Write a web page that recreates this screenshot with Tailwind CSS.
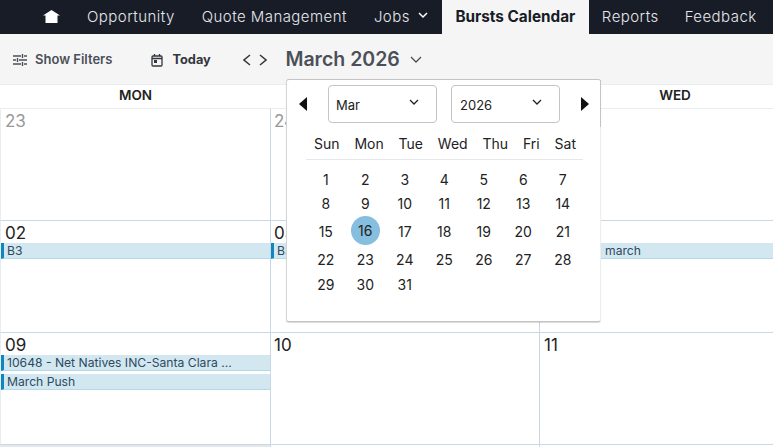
<!DOCTYPE html>
<html lang="en">
  <head>
    <meta charset="UTF-8" />
    <title>Bursts Calendar</title>
    <script src="https://cdn.jsdelivr.net/npm/@tailwindcss/browser@4"></script>
  </head>
  <body class="font-[Inter,sans-serif] bg-white overflow-hidden">
    <div class="relative w-[773px] h-[447px] overflow-hidden">
      <nav class="flex items-center h-[34px] bg-[#181c27] text-[#e5e7eb] text-[15px] tracking-[0.45px] font-light">
        <svg class="ml-[43px] mb-[1px] w-[17px] h-[15px]" viewBox="0 0 17 15" fill="#fff"><path d="M8.5 1 L17 6.5 H14.5 V14 H2.5 V6.5 H0 Z" /></svg>
        <span class="ml-[27px]">Opportunity</span>
        <span class="ml-[27px]">Quote Management</span>
        <span class="ml-[27px]">Jobs</span>
        <svg class="ml-[8px] mb-[4px] w-[10px] h-[7px]" viewBox="0 0 10 7" fill="none" stroke="#fff" stroke-width="1.5"><path d="M1 1l4 4 4-4" /></svg>
        <span class="ml-[14px] flex items-center justify-center h-full w-[147px] bg-[#f5f5f5] text-[#181c27] font-bold tracking-normal text-[15.3px]">Bursts Calendar</span>
        <span class="ml-[13px]">Reports</span>
        <span class="ml-[26px]">Feedback</span>
      </nav>

      <div class="flex items-center h-[50px] pt-[2px] bg-[#f5f5f5] text-[#4b5058]">
        <svg class="ml-[13px] w-[14px] h-[12px]" viewBox="0 0 14 12" fill="none" stroke="#4b5058" stroke-width="1.4"><path d="M0 2h8M11 2h3M9.5 0v4M0 6h3M6 6h8M4.5 4v4M0 10h8M11 10h3M9.5 8v4" /></svg>
        <span class="ml-[8px] text-[13px] font-semibold">Show Filters</span>
        <svg class="ml-[39px] w-[12px] h-[13px]" viewBox="0 0 12 13" fill="none" stroke="#33373d" stroke-width="1.3"><rect x="1" y="2" width="10" height="10" rx="1" /><path d="M1 4.5h10M3.5 0v2M8.5 0v2" /><rect x="3" y="6" width="3" height="3" fill="#33373d" stroke="none" /></svg>
        <span class="ml-[9px] w-[38px] text-[12.8px] font-bold text-[#33373d]">Today</span>
        <svg class="ml-[33px] w-[8px] h-[12px]" viewBox="0 0 8 12" fill="none" stroke="#33373d" stroke-width="1.5"><path d="M7 1L1 6l6 5" /></svg>
        <svg class="ml-[8px] w-[8px] h-[12px]" viewBox="0 0 8 12" fill="none" stroke="#33373d" stroke-width="1.5"><path d="M1 1l6 5-6 5" /></svg>
        <span class="ml-[18px] text-[19.5px] font-semibold">March 2026</span>
        <svg class="ml-[10px] w-[12px] h-[8px]" viewBox="0 0 12 8" fill="none" stroke="#4b5058" stroke-width="1.3"><path d="M1 1l5 5 5-5" /></svg>
      </div>

      <div class="grid grid-cols-[271px_269px_270px] w-[810px] h-[25px] border-t border-b border-[#e8edf1] text-[13.5px] font-semibold text-[#222] text-center leading-[20px]">
        <div>MON</div>
        <div>TUE</div>
        <div>WED</div>
      </div>

      <div class="grid grid-cols-[271px_269px_270px] grid-rows-[111px_112px_113px_2px] w-[810px] text-[#222] text-[17px] leading-[24px]">
        <div class="border-l border-l-[#e8edf1] border-r border-r-[#c8d8e4] pl-[4px] text-[#999]">23</div>
        <div class="border-r border-[#c8d8e4] pl-[3px] text-[#999]">24</div>
        <div class="pl-[4px] text-[#999]">25</div>

        <div class="border-l border-l-[#e8edf1] border-t border-r border-t-[#c8d8e4] border-r-[#c8d8e4]">
          <div class="h-[22px] pl-[4px]">02</div>
          <div class="h-[16px] border-l-[3px] border-l-[#0e86c0] border-b border-b-[#b4d8ec] bg-[#d3e7f1] pl-[3px] text-[12.15px] leading-[15px] text-[#2c4a60]">B3</div>
        </div>
        <div class="border-t border-r border-[#c8d8e4]">
          <div class="h-[22px] pl-[3px]">03</div>
          <div class="h-[16px] border-l-[3px] border-l-[#0e86c0] border-b border-b-[#b4d8ec] bg-[#d3e7f1] pl-[3px] text-[12.15px] leading-[15px] text-[#2c4a60]">B3</div>
        </div>
        <div class="border-t border-[#c8d8e4]">
          <div class="h-[22px]"></div>
          <div class="h-[16px] border-b border-b-[#b4d8ec] bg-[#d3e7f1] pl-[65px] text-[12.15px] leading-[15px] text-[#2c4a60]">march</div>
        </div>

        <div class="border-l border-l-[#e8edf1] border-t border-b border-r border-t-[#c8d8e4] border-b-[#c8d8e4] border-r-[#c8d8e4]">
          <div class="h-[22px] pl-[4px]">09</div>
          <div class="h-[16px] border-l-[3px] border-l-[#0e86c0] border-b border-b-[#b4d8ec] bg-[#d3e7f1] pl-[3px] text-[12.15px] leading-[15px] text-[#2c4a60]">10648 - Net Natives INC-Santa Clara ...</div>
          <div class="mt-[3px] h-[16px] border-l-[3px] border-l-[#0e86c0] border-b border-b-[#b4d8ec] bg-[#d3e7f1] pl-[3px] text-[12.15px] leading-[15px] text-[#2c4a60]">March Push</div>
        </div>
        <div class="border-t border-b border-r border-[#c8d8e4] pl-[3px]">10</div>
        <div class="border-t border-b border-[#c8d8e4] pl-[4px]">11</div>

        <div class="bg-[#e4e8ec] border-r border-[#c8d8e4]"></div>
        <div class="border-r border-[#c8d8e4]"></div>
        <div></div>
      </div>

      <!-- month picker popover -->
      <div class="absolute left-[286px] top-[79px] w-[315px] h-[243px] bg-white border border-[#c4c4c4] border-l-[#d4d4d4] border-r-[#eeeeee] rounded-[3px] shadow-[0_1px_1px_rgba(0,0,0,0.15)] text-[#222]">
        <div class="absolute right-[-1px] top-0 w-[1px] h-[47px] bg-[#c4c4c4]"></div>
        <div class="flex items-center h-[48px]">
          <svg class="ml-[12px] w-[8px] h-[14px]" viewBox="0 0 8 14" fill="#111"><path d="M8 0v14L0 7z" /></svg>
          <div class="ml-[21px] flex items-center justify-between w-[109px] h-[38px] border border-[#c4c4c4] rounded-[4px] pl-[7px] pr-[17px] text-[13px]">
            <span class="pt-[3px]">Mar</span>
            <svg class="mb-[4px] w-[10px] h-[6px]" viewBox="0 0 10 6" fill="none" stroke="#222" stroke-width="1.3"><path d="M1 1l4 4 4-4" /></svg>
          </div>
          <div class="ml-[14px] flex items-center justify-between w-[109px] h-[38px] border border-[#c4c4c4] rounded-[4px] pl-[8px] pr-[17px] text-[13px]">
            <span class="pt-[3px]">2026</span>
            <svg class="mb-[4px] w-[10px] h-[6px]" viewBox="0 0 10 6" fill="none" stroke="#222" stroke-width="1.3"><path d="M1 1l4 4 4-4" /></svg>
          </div>
          <svg class="ml-[21px] w-[8px] h-[14px]" viewBox="0 0 8 14" fill="#111"><path d="M0 0v14l8-7z" /></svg>
        </div>
        <div class="ml-[19px] mr-[17px] mt-[1px] flex justify-between h-[31px] pl-[8px] pr-[7px] border-b border-[#e5e7eb] text-[14px] leading-[30px]">
          <span>Sun</span><span>Mon</span><span>Tue</span><span>Wed</span><span>Thu</span><span>Fri</span><span>Sat</span>
        </div>
        <div class="grid grid-cols-[repeat(7,39.5px)] grid-rows-[24px_24px_32px_24px_26px] mt-[7px] ml-[19px] text-[14px] text-center items-center">
          <span>1</span><span>2</span><span>3</span><span>4</span><span>5</span><span>6</span><span>7</span>
          <span>8</span><span>9</span><span>10</span><span>11</span><span>12</span><span>13</span><span>14</span>
          <span>15</span>
          <span class="justify-self-center flex items-center justify-center mb-[2px] w-[29px] h-[29px] rounded-full bg-[#85bede]">16</span>
          <span>17</span><span>18</span><span>19</span><span>20</span><span>21</span>
          <span>22</span><span>23</span><span>24</span><span>25</span><span>26</span><span>27</span><span>28</span>
          <span>29</span><span>30</span><span>31</span>
        </div>
      </div>
    </div>
  </body>
</html>
